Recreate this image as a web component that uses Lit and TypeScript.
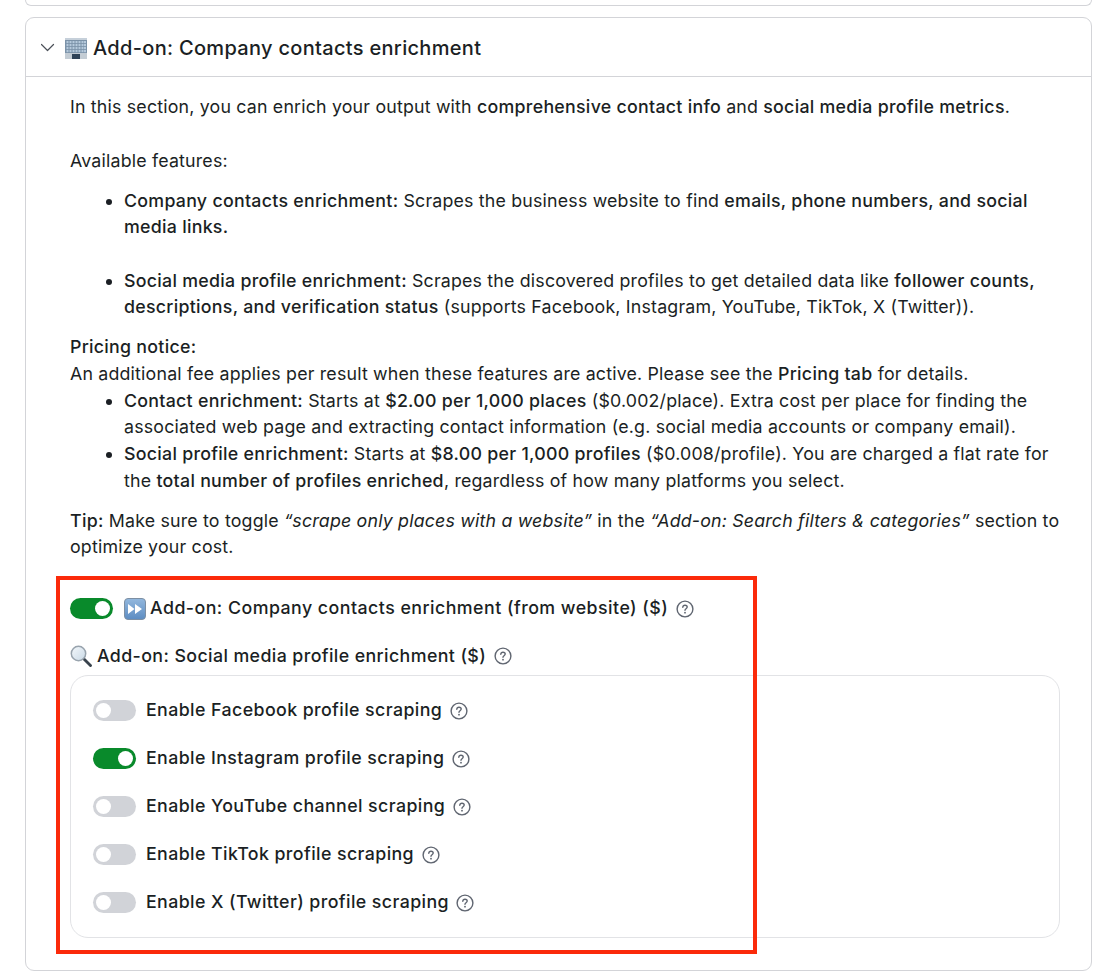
import { LitElement, html, css, svg } from 'lit';
import { customElement } from 'lit/decorators.js';

const helpIcon = html`<svg class="help" viewBox="0 0 18 18" width="18" height="18" fill="none">
  <circle cx="9" cy="9" r="7.9" stroke="#5f6570" stroke-width="1.4"></circle>
  <path d="M6.8 7.2c.1-1.3 1-2 2.2-2 1.3 0 2.2.8 2.2 1.9 0 1.5-2.2 1.7-2.2 3.1" stroke="#5f6570" stroke-width="1.4" stroke-linecap="round"></path>
  <circle cx="9" cy="12.7" r=".9" fill="#5f6570"></circle>
</svg>`;

const buildingIcon = html`<svg class="emoji" viewBox="0 0 22 22" width="22" height="22">
  <rect x="0" y="1" width="22" height="21" fill="#7b92a8"></rect>
  <rect x="0" y="1" width="22" height="2" fill="#c6d0da"></rect>
  ${[4, 7, 10, 13].map((y) =>
    [1.5, 4.5, 7.5, 10.5, 13.5, 16.5, 19].map((x) => svg`<rect x=${x} y=${y} width="2" height="2.2" fill="#b5c9dc"></rect>`)
  )}
  <rect x="0" y="16" width="22" height="6" fill="#c3ccd4"></rect>
  <rect x="7" y="17" width="8" height="5" fill="#2f4358"></rect>
</svg>`;

const forwardIcon = html`<svg class="emoji" viewBox="0 0 22 22" width="22" height="22">
  <defs>
    <linearGradient id="ff" x1="0" y1="0" x2="0" y2="1">
      <stop offset="0" stop-color="#93b8de"></stop>
      <stop offset="1" stop-color="#5c8cc2"></stop>
    </linearGradient>
  </defs>
  <rect x="0.5" y="0.5" width="21" height="21" rx="3.5" fill="url(#ff)" stroke="#7d8fa3"></rect>
  <path d="M4 6l6.5 5L4 16zM11 6l7 5-7 5z" fill="#fff"></path>
</svg>`;

const searchIcon = html`<svg class="emoji" viewBox="0 0 22 22" width="22" height="22">
  <defs>
    <linearGradient id="lens" x1="0" y1="0" x2="1" y2="1">
      <stop offset="0" stop-color="#f4f8fb"></stop>
      <stop offset="1" stop-color="#c9d9e6"></stop>
    </linearGradient>
  </defs>
  <path d="M12.5 14.5l2-2 7 7a1.4 1.4 0 0 1-2 2z" fill="#39434d"></path>
  <circle cx="8.5" cy="8.5" r="7.2" fill="url(#lens)" stroke="#98a3ad" stroke-width="1.5"></circle>
</svg>`;

const chevron = html`<svg class="chevron" viewBox="0 0 14 14" width="14" height="14" fill="none">
  <path d="M.5 3.5l6 6 6-6" stroke="#4b5058" stroke-width="1.2" stroke-linecap="round" stroke-linejoin="round"></path>
</svg>`;

const profiles = [
  { label: 'Enable Facebook profile scraping', on: false },
  { label: 'Enable Instagram profile scraping', on: true },
  { label: 'Enable YouTube channel scraping', on: false },
  { label: 'Enable TikTok profile scraping', on: false },
  { label: 'Enable X (Twitter) profile scraping', on: false },
];

@customElement('app-root')
export class AppRoot extends LitElement {
  static styles = css`
    :host {
      display: block;
      position: relative;
      height: 978px;
      background: #fff;
      color: #1b1f24;
      font-family: Inter, "Liberation Sans", sans-serif;
      font-size: 17.78px;
      line-height: 26.67px;
      letter-spacing: 0.19px;
      overflow: hidden;
    }

    .prev {
      height: 5px;
      margin: 0 18px 11px 25px;
      border: 1px solid #d3d4d8;
      border-top: 0;
      border-radius: 0 0 9px 9px;
    }

    .card {
      margin: 0 18px 0 25px;
      height: 954px;
      box-sizing: border-box;
      border: 1px solid #d3d4d8;
      border-radius: 9px;
    }

    .head {
      display: flex;
      align-items: center;
      height: 59px;
      box-sizing: border-box;
      padding: 2px 0 0 15px;
      border-bottom: 1px solid #d3d4d8;
      font-size: 20px;
      font-weight: 500;
      letter-spacing: 0.31px;
    }

    .chevron {
      margin-right: 10px;
    }

    .head .emoji {
      margin-right: 6px;
    }

    .body {
      padding: 17px 31px 0 44px;
    }

    p {
      margin: 0;
    }

    b {
      font-weight: 500;
      letter-spacing: 0.28px;
    }

    .gap-l {
      margin-top: 27px;
    }

    .gap-m {
      margin-top: 13.33px;
    }

    ul {
      margin: 0;
      padding-left: 54px;
    }

    li + li.spaced {
      margin-top: 26.67px;
    }

    .line {
      display: flex;
      align-items: center;
      font-weight: 500;
    }

    .line .emoji {
      margin-right: 5px;
    }

    .first {
      margin-top: 34px;
      height: 27px;
      letter-spacing: 0.47px;
    }

    .first .toggle {
      margin-right: 11px;
    }

    .first .emoji {
      margin-right: 4px;
    }

    .second {
      margin-top: 20.5px;
      height: 27px;
      letter-spacing: 0.4px;
    }

    .help {
      margin-left: 8px;
      flex: none;
    }

    .toggle {
      width: 43px;
      height: 21px;
      flex: none;
      box-sizing: border-box;
      display: flex;
      align-items: center;
      justify-content: flex-start;
      padding: 0 2.5px;
      border-radius: 11px;
      background: #d1d3d8;
      margin-right: 10px;
    }

    .toggle.on {
      background: #098a2b;
      justify-content: flex-end;
      padding: 0 3px;
    }

    .toggle i {
      width: 15.5px;
      height: 15.5px;
      border-radius: 50%;
      background: #fff;
    }

    .group {
      margin-top: 5px;
      height: 263px;
      box-sizing: border-box;
      border: 1px solid #e2e3e6;
      border-radius: 18px;
      padding: 11px 22px;
    }

    .row {
      height: 48px;
      letter-spacing: 0.41px;
    }

    .row .help {
      margin-left: 7.5px;
    }

    .overlay {
      position: absolute;
      left: 56px;
      top: 576px;
      width: 701px;
      height: 378px;
      box-sizing: border-box;
      border: 4px solid #fb2a0a;
      pointer-events: none;
    }
  `;

  private _row(label: string, on: boolean) {
    return html`<div class="line row">
      <span class="toggle ${on ? 'on' : ''}"><i></i></span>
      ${label}${helpIcon}
    </div>`;
  }

  render() {
    return html`
      <div class="prev"></div>
      <section class="card">
        <div class="head">${chevron}${buildingIcon}Add-on: Company contacts enrichment</div>
        <div class="body">
          <p>In this section, you can enrich your output with <b>comprehensive contact info</b> and <b>social media profile metrics</b>.</p>
          <p class="gap-l">Available features:</p>
          <ul class="gap-m">
            <li><b>Company contacts enrichment:</b> Scrapes the business website to find <b>emails, phone numbers, and social media links.</b></li>
            <li class="spaced"><b>Social media profile enrichment:</b> Scrapes the discovered profiles to get detailed data like <b>follower counts, descriptions, and verification status</b> (supports Facebook, Instagram, YouTube, TikTok, X (Twitter)).</li>
          </ul>
          <p class="gap-m"><b>Pricing notice:</b><br />An additional fee applies per result when these features are active. Please see the <b>Pricing tab</b> for details.</p>
          <ul>
            <li><b>Contact enrichment:</b> Starts at <b>$2.00 per 1,000 places</b> ($0.002/place). Extra cost per place for finding the associated web page and extracting contact information (e.g. social media accounts or company email).</li>
            <li><b>Social profile enrichment:</b> Starts at <b>$8.00 per 1,000 profiles</b> ($0.008/profile). You are charged a flat rate for the <b>total number of profiles enriched</b>, regardless of how many platforms you select.</li>
          </ul>
          <p class="gap-m"><b>Tip:</b> Make sure to toggle <em>“scrape only places with a website”</em> in the <em>“Add-on: Search filters &amp; categories”</em> section to optimize your cost.</p>
          <div class="line first">
            <span class="toggle on"><i></i></span>${forwardIcon}Add-on: Company contacts enrichment (from website) ($)${helpIcon}
          </div>
          <div class="line second">${searchIcon}Add-on: Social media profile enrichment ($)${helpIcon}</div>
          <div class="group">
            ${profiles.map((p) => this._row(p.label, p.on))}
          </div>
        </div>
      </section>
      <div class="overlay"></div>
    `;
  }
}
